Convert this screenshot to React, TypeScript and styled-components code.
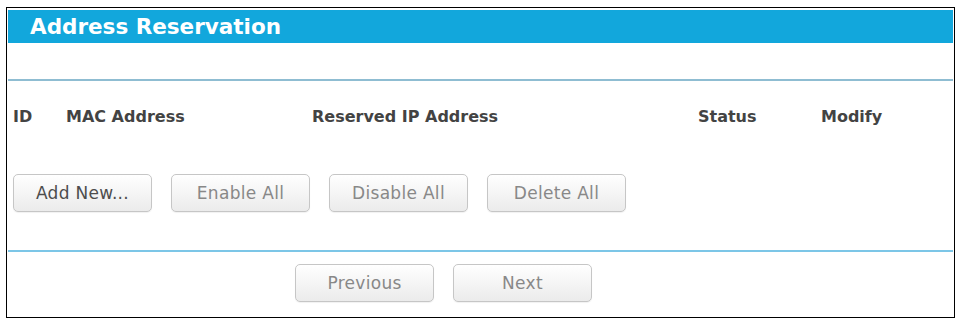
import styled, { createGlobalStyle } from 'styled-components';

const GlobalStyle = createGlobalStyle`
  body {
    margin: 0;
    background: #ffffff;
    font-family: "DejaVu Sans", Verdana, sans-serif;
  }
`;

const Frame = styled.div`
  margin: 7px 0 0 6px;
  width: 945px;
  height: 307px;
  border: 1px solid #000000;
  padding: 2px 1px 0 1px;
  box-sizing: content-box;
  display: flex;
  flex-direction: column;
  background: #ffffff;
`;

const TitleBar = styled.div`
  height: 33px;
  background: #12a7dc;
  color: #ffffff;
  font-weight: bold;
  font-size: 21.5px;
  display: flex;
  align-items: center;
  padding-left: 22px;
`;

const Divider = styled.div<{ $color: string }>`
  height: 2px;
  background: ${(p) => p.$color};
`;

const HeaderRow = styled.div`
  display: grid;
  grid-template-columns: 53px 246px 386px 123px auto;
  padding-left: 5px;
  height: 70px;
  align-items: center;
  color: #434343;
  font-weight: bold;
  font-size: 16px;
`;

const ButtonRow = styled.div<{ $left: number }>`
  display: flex;
  gap: 19px;
  padding-left: ${(p) => p.$left}px;
  align-items: center;
`;

const Button = styled.button<{ $dim?: boolean }>`
  width: 139px;
  height: 38px;
  box-sizing: border-box;
  border: 1px solid #c6c6c6;
  border-radius: 5px;
  background: linear-gradient(#ffffff, #f3f3f3 60%, #ebebeb);
  box-shadow: 0 1px 1px rgba(0, 0, 0, 0.06);
  font-family: "DejaVu Sans", Verdana, sans-serif;
  font-size: 17px;
  letter-spacing: 0.3px;
  color: ${(p) => (p.$dim ? '#888888' : '#4d4d4d')};
  padding: 0;
`;

const Spacer = styled.div<{ $h: number }>`
  height: ${(p) => p.$h}px;
`;

export default function App() {
  return (
    <>
      <GlobalStyle />
      <Frame>
        <TitleBar>Address Reservation</TitleBar>
        <Spacer $h={36} />
        <Divider $color="#8fbdd2" />
        <HeaderRow>
          <span>ID</span>
          <span>MAC Address</span>
          <span>Reserved IP Address</span>
          <span>Status</span>
          <span>Modify</span>
        </HeaderRow>
        <Spacer $h={23} />
        <ButtonRow $left={5}>
          <Button>Add New...</Button>
          <Button $dim>Enable All</Button>
          <Button $dim>Disable All</Button>
          <Button $dim>Delete All</Button>
        </ButtonRow>
        <Spacer $h={38} />
        <Divider $color="#7cc6e7" />
        <Spacer $h={12} />
        <ButtonRow $left={287}>
          <Button $dim>Previous</Button>
          <Button $dim>Next</Button>
        </ButtonRow>
      </Frame>
    </>
  );
}
